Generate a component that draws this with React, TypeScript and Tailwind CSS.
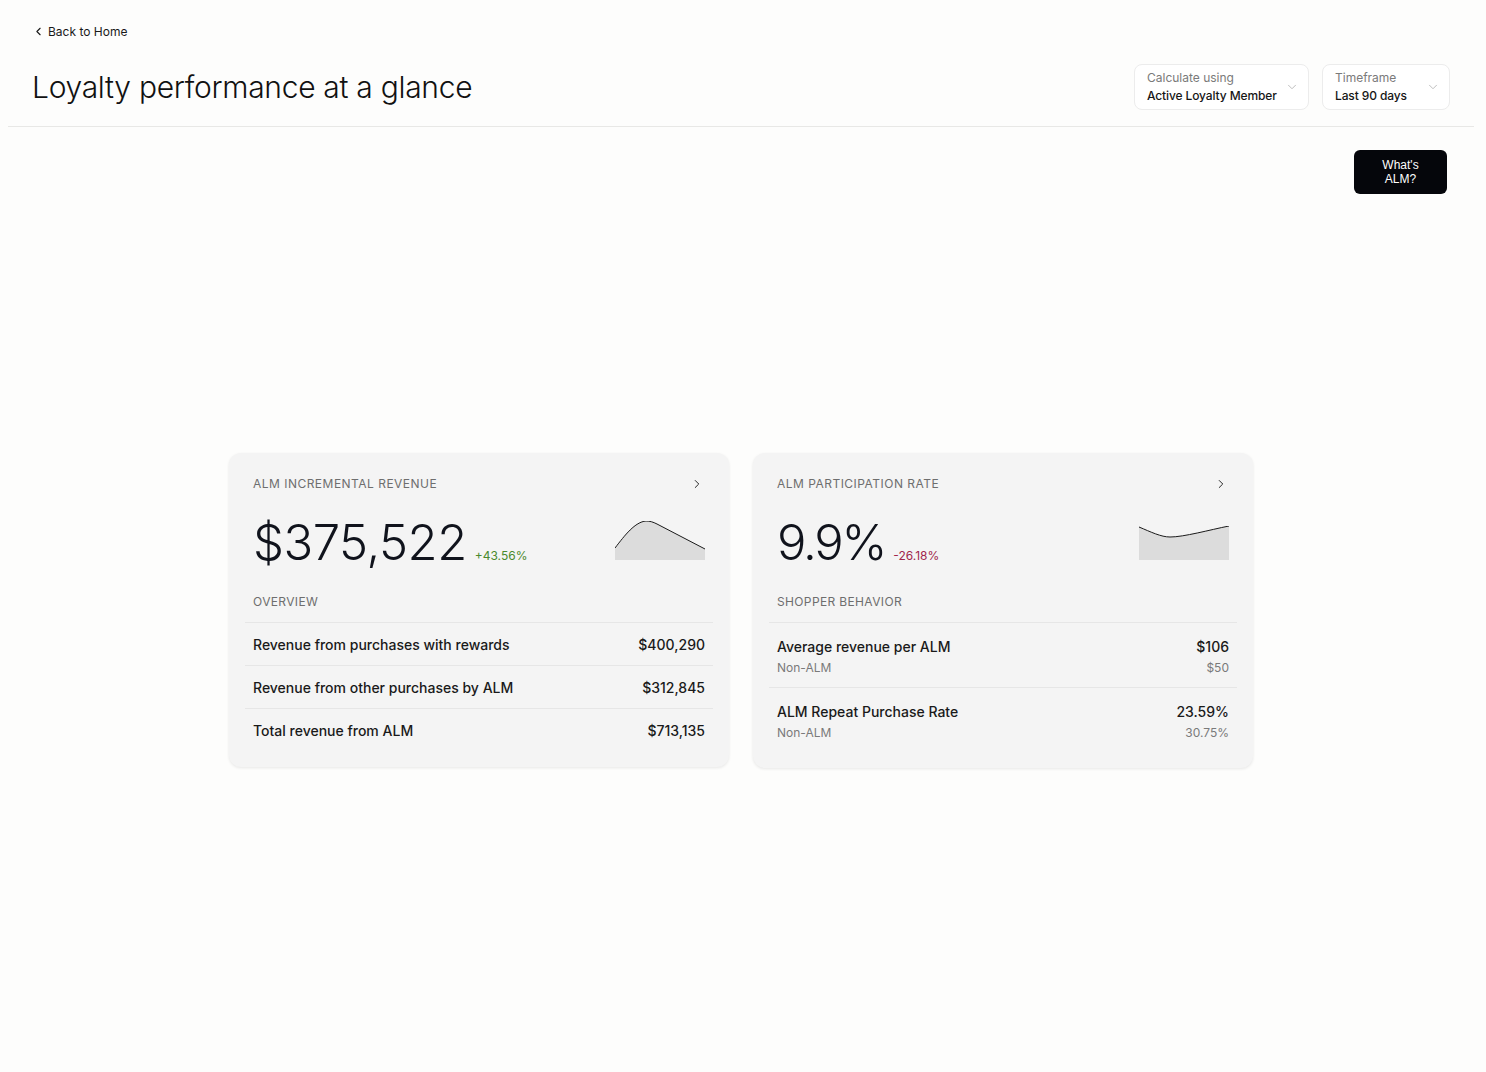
import { ChevronLeft, ChevronRight, ChevronDown } from "lucide-react";

const font = { fontFamily: "Inter, 'Noto Sans', sans-serif" };

function Select({ label, value, width }: { label: string; value: string; width: string }) {
  return (
    <div className={`${width} h-[46px] flex items-center justify-between pl-3 pr-[9px] bg-white border border-[#ececec] rounded-lg`}>
      <div className="flex flex-col leading-none whitespace-nowrap">
        <span className="text-[12px] text-[#7a7a7a]">{label}</span>
        <span className="text-[12px] font-medium text-[#161616] mt-[6px] tracking-[-0.01em]">{value}</span>
      </div>
      <ChevronDown className="w-[14px] h-[14px] text-[#b5b5b5] shrink-0" strokeWidth={1.5} />
    </div>
  );
}

function Sparkline({ line, fill, h }: { line: string; fill: string; h: number }) {
  return (
    <svg width="90" height={h} viewBox={`0 0 90 ${h}`} className="block mb-[7px]">
      <path d={fill} fill="#dcdcdc" />
      <path d={line} fill="none" stroke="#1a1a1a" strokeWidth="1" />
    </svg>
  );
}

function CardHeader({ title }: { title: string }) {
  return (
    <div className="flex items-center justify-between px-6 pt-6">
      <span className="text-[12px] tracking-[0.04em] text-[#6e6e6e] leading-none">{title}</span>
      <ChevronRight className="w-[14px] h-[14px] text-[#1a1a1a] mr-[1px]" strokeWidth={1.6} />
    </div>
  );
}

export default function App() {
  return (
    <div className="min-h-screen bg-[#fdfdfc] text-[#141414]" style={font}>
      <div className="mr-[4px]">
        <header className="mx-2 px-6 border-b border-[#e8e8e6]">
          <div className="pt-[25px] flex items-center gap-[3px] text-[12px] text-[#1a1a1a] leading-none">
            <ChevronLeft className="w-[13px] h-[13px]" strokeWidth={2} />
            <span>Back to Home</span>
          </div>
          <div className="flex items-center justify-between pt-[26px] pb-[16px]">
            <h1 className="text-[30px] font-light tracking-[-0.01em] text-[#111111] leading-none">
              Loyalty performance at a glance
            </h1>
            <div className="flex items-center gap-[13px]">
              <Select label="Calculate using" value="Active Loyalty Member" width="w-[175px]" />
              <Select label="Timeframe" value="Last 90 days" width="w-[128px]" />
            </div>
          </div>
        </header>

        <div className="flex justify-end pr-[35px] pt-[23px]">
          <button className="w-[93px] h-[44px] bg-[#05060b] text-white text-[12px] font-medium leading-[14px] rounded-md flex items-center justify-center text-center" style={{ fontFamily: "'Liberation Sans', Arial, sans-serif" }}>
            What's
            <br />
            ALM?
          </button>
        </div>

        <div className="flex justify-center gap-6 mt-[259px]">
          <div className="w-[500px] h-[314px] bg-[#f4f4f4] rounded-xl shadow-[0_1px_3px_rgba(0,0,0,0.09)]">
            <CardHeader title="ALM INCREMENTAL REVENUE" />
            <div className="flex items-end justify-between px-6 mt-[27px]">
              <div className="flex items-baseline gap-[8px]">
                <span className="text-[49px] font-light text-[#10131c] leading-none tracking-[-0.01em]">$375,522</span>
                <span className="text-[12px] text-[#4a8a2e]">+43.56%</span>
              </div>
              <Sparkline
                h={39}
                line="M0,27 C10,14 20,1 31,0 C35,0 38,1 42,3 L90,28"
                fill="M0,27 C10,14 20,1 31,0 C35,0 38,1 42,3 L90,28 L90,39 L0,39 Z"
              />
            </div>
            <div className="px-6 mt-[29px] text-[12px] tracking-[0.03em] text-[#6e6e6e] leading-none">OVERVIEW</div>
            <div className="mx-4 mt-[14px]">
              {[
                ["Revenue from purchases with rewards", "$400,290"],
                ["Revenue from other purchases by ALM", "$312,845"],
                ["Total revenue from ALM", "$713,135"],
              ].map(([k, v]) => (
                <div key={k} className="h-[43px] flex items-center justify-between px-2 border-t border-[#e6e6e6] text-[14px] font-medium text-[#1a1a1a]">
                  <span>{k}</span>
                  <span>{v}</span>
                </div>
              ))}
            </div>
          </div>

          <div className="w-[500px] h-[315px] bg-[#f4f4f4] rounded-xl shadow-[0_1px_3px_rgba(0,0,0,0.09)]">
            <CardHeader title="ALM PARTICIPATION RATE" />
            <div className="flex items-end justify-between px-6 mt-[27px]">
              <div className="flex items-baseline gap-[8px]">
                <span className="text-[49px] font-light text-[#10131c] leading-none tracking-[-0.045em]">9.9%</span>
                <span className="text-[12px] text-[#a1264c]">-26.18%</span>
              </div>
              <Sparkline
                h={34}
                line="M0,1 C12,6 22,11 31,11 C45,11 70,4 90,0"
                fill="M0,1 C12,6 22,11 31,11 C45,11 70,4 90,0 L90,34 L0,34 Z"
              />
            </div>
            <div className="px-6 mt-[29px] text-[12px] tracking-[0.03em] text-[#6e6e6e] leading-none">SHOPPER BEHAVIOR</div>
            <div className="mx-4 mt-[14px]">
              {[
                ["Average revenue per ALM", "$106", "$50"],
                ["ALM Repeat Purchase Rate", "23.59%", "30.75%"],
              ].map(([k, v, s]) => (
                <div key={k} className="h-[65px] flex flex-col pt-[15px] px-2 border-t border-[#e6e6e6]">
                  <div className="flex justify-between text-[14px] font-medium text-[#1a1a1a] leading-[18px]">
                    <span>{k}</span>
                    <span>{v}</span>
                  </div>
                  <div className="flex justify-between text-[12px] text-[#7a7a7a] leading-[16px] mt-[4px]">
                    <span>Non-ALM</span>
                    <span>{s}</span>
                  </div>
                </div>
              ))}
            </div>
          </div>
        </div>
      </div>
    </div>
  );
}
